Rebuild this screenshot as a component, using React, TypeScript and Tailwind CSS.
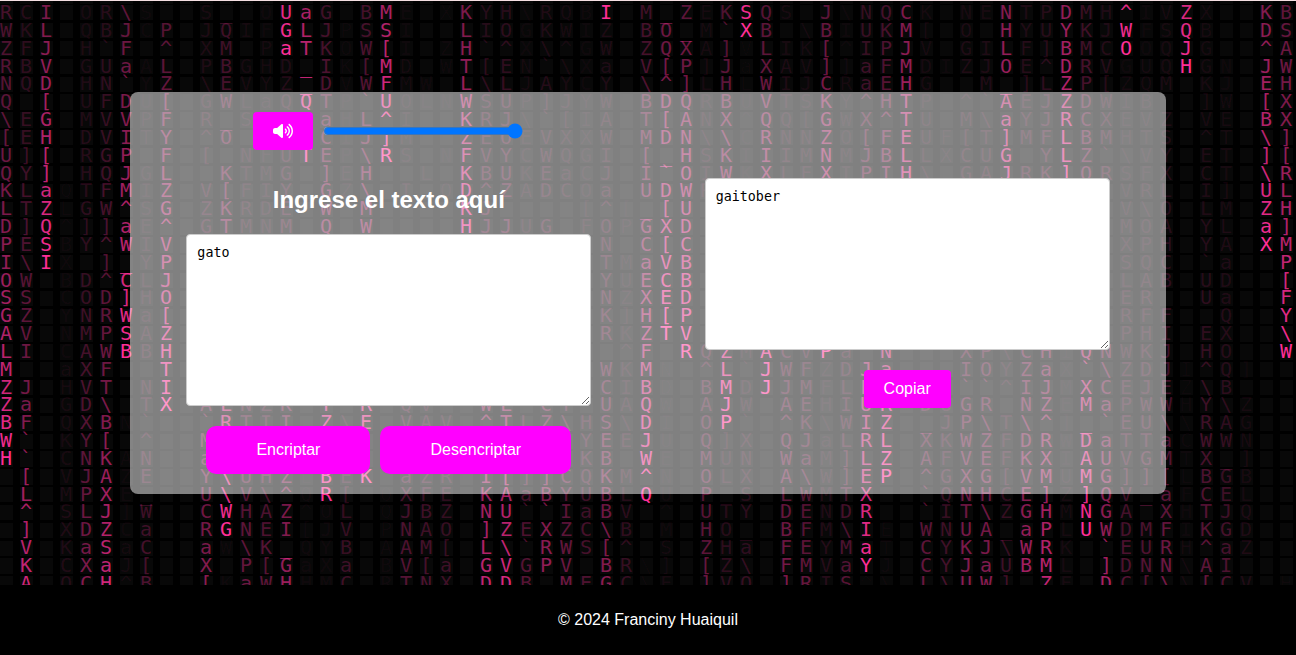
import { useState } from "react";
import { FaVolumeHigh } from "react-icons/fa6";

const ROWS = 33;
const COLUMNS = 65;

// Each rain row is stored in four chunks of 16, 16, 16 and 17 glyphs.
const GLYPHS: string[][] = [
  ["RCI OR\\S  S_ OUa", "G BME XKYH\\RQBI ", "M_ZEKSQS J\\NQCK ", "NENTPDMH^IVZX  KB"],
  ["WKL QBJCP JQIFGL", "JPSSI  LIOGKWIZ ", "BO_M`XB \\BIUKM[ ", "O HYUYKJWFSQB  DS"],
  ["ZFJ H`F ^ XM PaT", "KOW[I ZH`^X\\^GW ", "ZQXA]VLIK[^IPJV ", "GILF]BMCOOQJG  ^A"],
  ["RBV GUaAL PBGHD_", "IK[MD WT[EN`\\Xa ", "V[P]JaXAV]]aFMDI", "ZJOE^DRVGUQHGN JW"],
  ["NQD HN`YZ \\EVYZ_", "DVWFMW L\\LJAYCY ", "\\^]LHLWIJCRaEHG ", " M_]LZP[ZQM KJ EH"],
  ["Q [ UFDU[ GWLaQQ", "TP`UOLNWSUP]JYW ", "BDQRBUVTSKY^HTP ", "^`AEJZDWIB  ]W [X"],
  ["\\EGRMVVPF R_S", "aHL^I  KRJ\\`[IA ", "T[ANX^QQ[GWX^TU ", "M\\aYJRCXEVZ VE BX"],
  ["[EHFDVITY ^O", "CIJ]M  ZEOEVXXW ", "MDN\\\\CRNNZO[FEUF", "[T]MFLBMHTS ^T \\]"],
  ["U][BRGP F [ NFUT", "EP\\RS NFVYCWQGI ", "[_HSKIIIMNMJBLLX", "CUG YLZ`\\VY ET ]["],
  ["QY]MHQJGL  KTMG ", "]EH  L KBUKEaCJ ", "I`OIWKXLFXIPIH\\ ", "GAJRK]ORSFX CT \\R"],
  ["KLaQTFMIZ V[FIY ", "GZ\\ I OD^ZADCOa ", "UDWR", "        VRL I] UL"],
  ["LTZLGW^SG ZKRDE ", "W M    KJ    [^[", "_[U", "        V\\O LM ZH"],
  ["D]Q^]]aE^ GTMNM ", "Q W    HJJUG FOP", "GXD", "        MOA YL a]"],
  ["PESBY^WIV", "              N ", "C[C", "        XPH YA XM"],
  ["I\\IX ]_YP", "              TM", "aVB", "        SQC `a  P"],
  ["OW BD^CLJ", "              YU", "ECB", "        LAB UD  ["],
  ["SS COD]HO", "              NZ", "XED", "        ER  Ua  F"],
  ["GZ YNRWa[", "              K]", "H[P", "        RFF  Q  Y"],
  ["AV NMPSAZ", "              RK", "ZTV", "        PHIPEX  \\"],
  ["LI CAWBBH", "               ^", "FXRQZMACVPa N", "XP\\CHIQNWKJNHO  W"],
  ["M  aXF  T", "              WK", "MN_^L`JWFZDJa", "IOYZaX`\\ZDJI^Q]"],
  ["ZJ HVT NI", "              CI", "BD BMDJJMFLF", "``^IJMXCEJEZ\\B"],
  ["Za GD\\ TX ALNZK ", "T R QV  WL CT UA", "QW AJW AEHIUR DU", "GR NZEMaPWWHY\\Z"],
  ["BF QXBN`  `RTII ", "Z\\E VAV ^TLZ\\HS\\", "DI OP``^K\\WIZ _J", "P\\T\\^]_`EU\\\\RAG"],
  ["W` KY[ ^  MV", "             YEE", "JU Q]X QJaLRL XK", "WZFDRWDaTTaCWWN"],
  ["H` CNKAN  a]", "             KB ", "WE MUN WaM]LZ AF", "VEFKXIAUVGMTX_]"],
  [" [ VJAZE  Y\\UHZL", "BEKNaZR I[]]CQKM", "^N OLX A\\W]EP ^G", "XG[VMUMG]][LBGB"],
  [" L MPXE_  U\\V\\^Q", "R[ OXFE KAaBYUBL", "QU P SRLWMTX  `Q", "NHCE]Z]QV_aFCEL"],
  [" ^ SLJ]WYRCWHAZ^", "OL QJBZ NU``IaBV", "I^ UTYYDENDR  `I", "T\\ZGHMNGA XHTJQ"],
  [" ] XDZCaVVRGNEI[", "JV PNAO ]ZEXZC\\B", " M HO_FBFM\\IE WN", "UA_aPLUWDMFIKGD A"],
  [" V KaSaC  aW\\K_Q", "YB AAM[ L\\`RWS[^", " SKZHaWFEYMaT CY", "KJ\\WRK `EURH^aZ H"],
  [" K CXaJ[UDX P[Ga", "Xa BV[a GVGPV BR", "\\]H[Z\\GFMVaYJ CY", "JaUBML ]DNN\\AI  E"],
  [" A OCH^BOG[KaWHH", "MC RTNX DDB MEGC", "\\F ]VQ ]RIS^\\ L\\", "UW] ZF DC[\\\\[CV^H"],
];

// Per column: the row of the falling head, and how many steps ago the
// previous drop left the last row (used for the cells under the head).
const DROPS: [number, number][] = [
  [26, 80], [37, 0], [15, 80], [71, 0], [46, 0], [37, 0], [20, 48], [57, 0],
  [23, 62], [95, 0], [45, 0], [30, 55], [50, 0], [53, 0], [3, 10], [9, 52],
  [28, 52], [60, 0], [27, 75], [9, 55], [54, 0], [57, 0], [60, 0], [15, 80],
  [38, 0], [36, 0], [54, 0], [43, 0], [49, 0], [56, 0], [1, 12], [63, 0],
  [28, 58], [19, 48], [20, 70], [50, 0], [24, 32], [2, 30], [22, 60], [47, 0],
  [51, 0], [20, 36], [54, 0], [32, 60], [27, 55], [15, 80], [50, 0], [58, 0],
  [45, 0], [45, 0], [14, 27], [41, 0], [38, 0], [12, 44], [30, 70], [41, 0],
  [3, 22], [54, 0], [48, 0], [4, 48], [51, 0], [56, 0], [72, 0], [14, 72],
  [20, 60],
];

function cellOpacity(row: number, column: number): number {
  const [head, tail] = DROPS[column];
  const age = row <= head ? head - row : tail + ROWS - row;
  return Math.max(0.015, (Math.pow(0.95, age) - 0.02) / 0.98);
}

function RainBackdrop() {
  const rows = GLYPHS.map((chunks) =>
    chunks
      .map((chunk) => chunk.padEnd(16))
      .join("")
      .padEnd(COLUMNS),
  );

  return (
    <div
      aria-hidden="true"
      className="pointer-events-none absolute inset-0 overflow-hidden bg-black bg-[repeating-linear-gradient(to_right,#080808_0_13px,#000_13px_20px)] pt-[3px] select-none"
    >
      <div className="grid h-[101.3%] grid-rows-[repeat(33,minmax(0,1fr))] bg-[repeating-linear-gradient(to_bottom,#000_0_0.2%,transparent_0.2%_2.8%,#000_2.8%_3.0303%)] font-['DejaVu_Sans_Mono',monospace] text-[20px] leading-[17px]">
        {rows.map((row, r) => (
          <div key={r} className="flex">
            {row.split("").map((glyph, c) => (
              <span
                key={c}
                className="w-5 shrink-0"
                style={{ color: `rgb(255 46 151 / ${cellOpacity(r + 1, c).toFixed(3)})` }}
              >
                {glyph}
              </span>
            ))}
          </div>
        ))}
      </div>
    </div>
  );
}

const textAreaClass =
  "block h-[172px] w-[78.1%] resize rounded border border-[#ccc] bg-white p-2.5 font-['DejaVu_Sans_Mono',monospace] text-[10pt] leading-4 text-black outline-none";

export default function App() {
  const [text, setText] = useState("gato");
  const [result, setResult] = useState("gaitober");
  const [volume, setVolume] = useState(100);

  const pairs: [string, string][] = [
    ["e", "enter"],
    ["i", "imes"],
    ["a", "ai"],
    ["o", "ober"],
    ["u", "ufat"],
  ];

  const encrypt = () => setResult(pairs.reduce((acc, [from, to]) => acc.split(from).join(to), text));
  const decrypt = () => setResult(pairs.reduce((acc, [from, to]) => acc.split(to).join(from), text));

  return (
    <div className="flex min-h-screen flex-col border-t border-[#f5dfe2] bg-black font-['Liberation_Sans',Arial,sans-serif] text-white">
      <main className="relative flex grow flex-col items-center justify-center py-5">
        <RainBackdrop />
        <div className="relative flex w-4/5 items-center rounded-lg bg-white/50 py-5">
          <section className="flex w-1/2 flex-col items-center">
            <div className="flex items-center gap-2.5 pr-0.5">
              <button
                type="button"
                aria-label="Sonido"
                className="flex h-[38px] w-[60px] items-center justify-center rounded bg-[#ff00ff]"
              >
                <FaVolumeHigh className="h-4 w-5" />
              </button>
              <input
                type="range"
                aria-label="Volumen"
                min={0}
                max={100}
                value={volume}
                onChange={(e) => setVolume(Number(e.target.value))}
                className="w-[200px]"
              />
            </div>
            <h2 className="mt-9 mb-5 text-2xl leading-7 font-bold">
              <label htmlFor="entrada">Ingrese el texto aquí</label>
            </h2>
            <textarea
              id="entrada"
              spellCheck={false}
              value={text}
              onChange={(e) => setText(e.target.value)}
              className={textAreaClass}
            />
            <div className="mt-5 flex gap-2.5">
              <button type="button" onClick={encrypt} className="h-12 rounded-[10px] bg-[#ff00ff] px-[50px]">
                Encriptar
              </button>
              <button type="button" onClick={decrypt} className="h-12 rounded-[10px] bg-[#ff00ff] px-[50px]">
                Desencriptar
              </button>
            </div>
          </section>
          <section className="flex w-1/2 flex-col items-center">
            <textarea aria-label="Resultado" readOnly spellCheck={false} value={result} className={textAreaClass} />
            <button
              type="button"
              onClick={() => navigator.clipboard?.writeText(result)}
              className="mt-5 h-[38px] rounded bg-[#ff00ff] px-5"
            >
              Copiar
            </button>
          </section>
        </div>
      </main>
      <footer className="flex h-[70px] items-center justify-center bg-black">
        <p>© 2024 Franciny Huaiquil</p>
      </footer>
    </div>
  );
}
